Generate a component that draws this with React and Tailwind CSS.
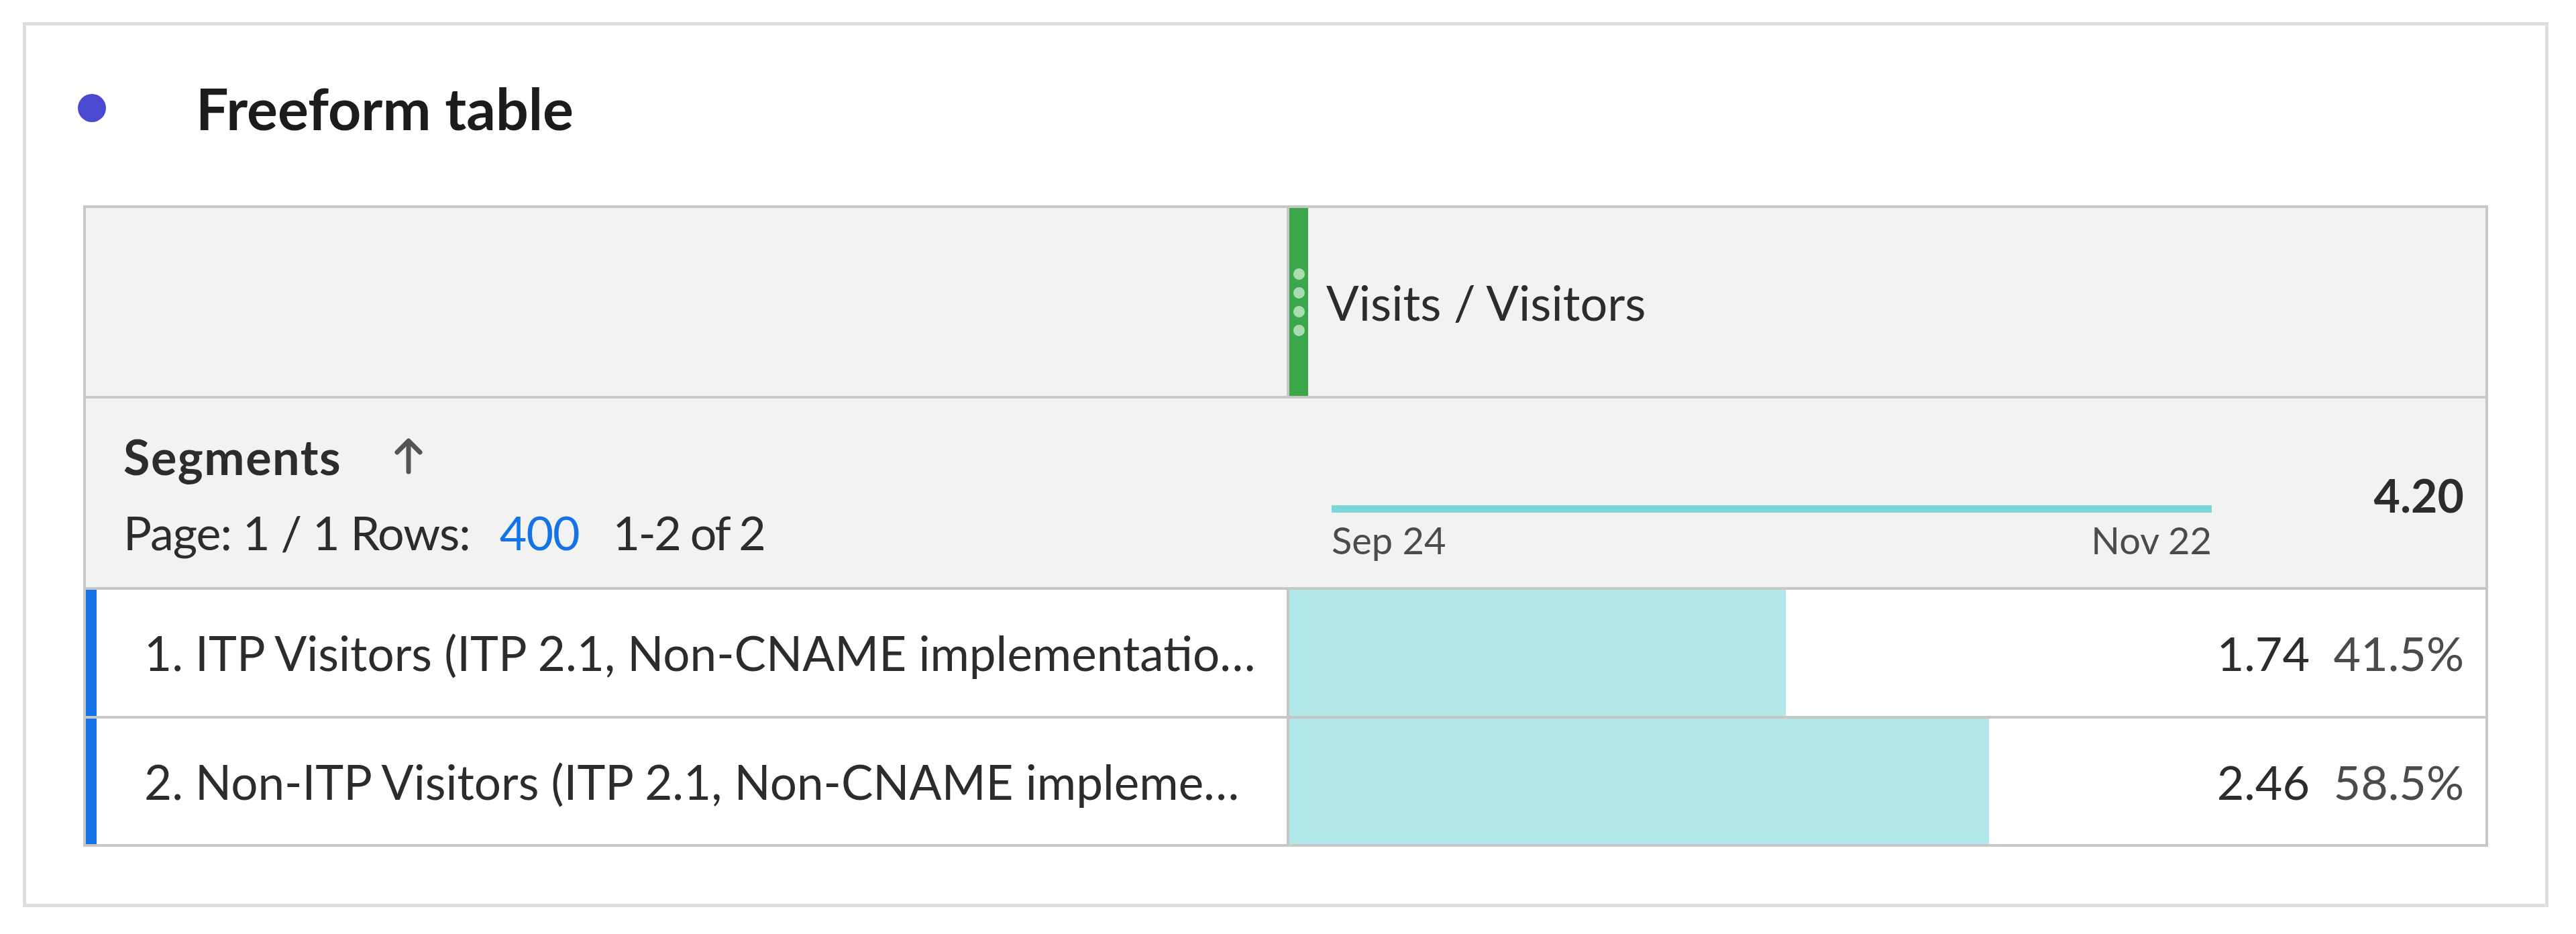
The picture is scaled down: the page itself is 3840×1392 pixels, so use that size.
import React from 'react';

const rows = [
  { label: '1. ITP Visitors (ITP 2.1, Non-CNAME implementatio…', value: '1.74', pct: '41.5%', share: 41.5 },
  { label: '2. Non-ITP Visitors (ITP 2.1, Non-CNAME impleme…', value: '2.46', pct: '58.5%', share: 58.5 },
];

const SortArrow = () => (
  <svg width="44" height="56" viewBox="0 0 44 56" fill="none" stroke="#555555" strokeWidth="7" strokeLinecap="round" strokeLinejoin="round">
    <path d="M22 51V6" />
    <path d="M5 22L22 5l17 17" />
  </svg>
);

const App = () => {
  return (
    <div className="w-[3840px] h-[1392px] bg-white pt-[33px] pl-[34px] font-['Lato','Open_Sans',sans-serif]">
      <div className="w-[3765px] h-[1319px] border-[5px] border-[#dedede] bg-white">
        {/* Panel title */}
        <div className="flex items-center h-[246px] pl-[77px]">
          <div className="w-[42px] h-[42px] rounded-full bg-[#4a4ad0]" />
          <h1 className="ml-[134px] text-[86px] font-bold leading-none text-[#1c1c1c]">Freeform table</h1>
        </div>

        {/* Table */}
        <div className="mx-[85px] mt-[22px] border-4 border-[#c7c7c7] text-[#2c2c2c]">
          {/* Column header */}
          <div className="flex h-[284px] bg-[#f2f2f2] border-b-4 border-[#c7c7c7]">
            <div className="w-[1790px]" />
            <div className="flex-1 flex items-center border-l-4 border-[#c7c7c7]">
              <div className="self-stretch w-[28px] bg-[#3aa74b] flex flex-col items-center justify-center gap-[11px]">
                <span className="w-[17px] h-[17px] rounded-full bg-[#a9dcb1]" />
                <span className="w-[17px] h-[17px] rounded-full bg-[#a9dcb1]" />
                <span className="w-[17px] h-[17px] rounded-full bg-[#a9dcb1]" />
                <span className="w-[17px] h-[17px] rounded-full bg-[#a9dcb1]" />
              </div>
              <span className="ml-[27px] text-[72px] leading-[1.2]">Visits / Visitors</span>
            </div>
          </div>

          {/* Dimension + totals */}
          <div className="flex h-[285px] bg-[#f2f2f2] border-b-4 border-[#c7c7c7]">
            <div className="w-[1794px] pl-[56px] pt-[43px] flex flex-col">
              <div className="flex items-center">
                <span className="text-[72px] font-bold leading-[1.2] tracking-[1.5px]">Segments</span>
                <span className="ml-[78px]"><SortArrow /></span>
              </div>
              <div className="mt-[28px] text-[70px] leading-[1.2] tracking-[-1px] whitespace-nowrap">
                Page: 1 / 1 Rows:
                <span className="ml-[44px] text-[#1473e6]">400</span>
                <span className="ml-[50px] tracking-[-2.5px]">1-2 of 2</span>
              </div>
            </div>
            <div className="flex-1 flex items-start pl-[63px] pr-[32px]">
              <div className="w-[1312px] mt-[159px] flex flex-col">
                <div className="h-[11px] bg-[#7ad8d8]" />
                <div className="mt-[7px] flex justify-between text-[56px] leading-[1.2] text-[#4b4b4b]">
                  <span>Sep 24</span>
                  <span>Nov 22</span>
                </div>
              </div>
              <span className="ml-auto mt-[103px] text-[68px] font-bold leading-[1.2]">4.20</span>
            </div>
          </div>

          {/* Rows */}
          {rows.map((row, i) => (
            <div
              key={row.value}
              className={`flex ${i === 0 ? 'h-[192px] border-b-4 border-[#c7c7c7]' : 'h-[187px]'} bg-white`}
            >
              <div className="w-[16px] bg-[#1473e6]" />
              <div className="w-[1774px] flex items-center pl-[71px] text-[71px] leading-[1.2] whitespace-nowrap overflow-hidden">
                {row.label}
              </div>
              <div className="flex-1 flex items-center border-l-4 border-[#c7c7c7]">
                <div className="self-stretch shrink-0 bg-[#b1e9ea]" style={{ width: `${row.share}%` }} />
                <div className="ml-auto pr-[32px] flex items-center text-[70px] leading-[1.2]">
                  <span>{row.value}</span>
                  <span className="ml-[30px] w-[200px] text-right text-[#4b4b4b]">{row.pct}</span>
                </div>
              </div>
            </div>
          ))}
        </div>
      </div>
    </div>
  );
};

export default App;
